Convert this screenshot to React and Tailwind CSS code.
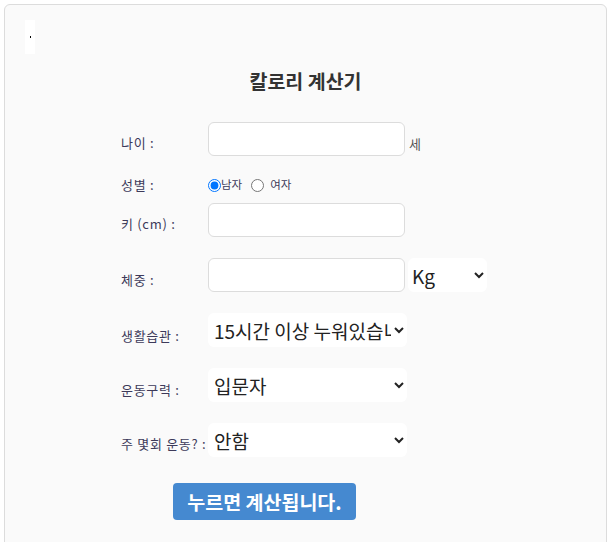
import React, { useState } from 'react';

const font = { fontFamily: '"Noto Sans CJK KR", "Noto Sans", sans-serif' };

function Row({ label, pb = 'pb-1', className = '', children }) {
  return (
    <div className={`flex items-end ${className}`}>
      <label className={`w-[87px] shrink-0 whitespace-nowrap text-[13px] tracking-[0.7px] leading-[18px] text-[#3d3a5a] ${pb}`}>{label}</label>
      {children}
    </div>
  );
}

export default function App() {
  const [gender, setGender] = useState('m');

  return (
    <div className="p-1" style={font}>
      {/* Card */}
      <div className="border border-[#dcdcdc] rounded-md bg-[#fafafa] pt-[15px] pb-10 min-h-[560px]">
        <div className="ml-5 w-[10px] h-[34px] bg-white flex items-center justify-center">
          <span className="block w-px h-[2px] bg-black"></span>
        </div>

        <h1 className="mt-[13px] text-center text-[19.5px] leading-[27px] font-bold text-[#333]">
          칼로리 계산기
        </h1>

        {/* Form */}
        <div className="pl-[116px] flex flex-col">
          <Row label="나이 :" className="mt-[28px]">
            <input className="w-[197px] h-[34px] bg-white border border-[#dcdcdc] rounded-md" />
            <span className="ml-[4px] text-[13px] leading-[18px] pb-[3px] text-[#555]">세</span>
          </Row>

          <Row label="성별 :" pb="pb-0" className="mt-[20px] !items-center">
            <label className="flex items-center text-[11.5px] text-[#3d3a5a]">
              <input
                type="radio"
                name="g"
                checked={gender === 'm'}
                onChange={() => setGender('m')}
                className="w-[13px] h-[13px]"
              />
              남자
            </label>
            <label className="flex items-center text-[11.5px] text-[#3d3a5a] ml-[9px]">
              <input
                type="radio"
                name="g"
                checked={gender === 'f'}
                onChange={() => setGender('f')}
                className="w-[13px] h-[13px] mr-[6px]"
              />
              여자
            </label>
          </Row>

          <Row label="키 (cm) :" className="mt-[9px]">
            <input className="w-[197px] h-[34px] bg-white border border-[#dcdcdc] rounded-md" />
          </Row>

          <Row label="체중 :" pb="pb-[3px]" className="mt-[21px]">
            <input className="w-[197px] h-[34px] bg-white border border-[#dcdcdc] rounded-md" />
            <select className="ml-[3px] w-[79px] h-[34px] bg-white rounded-md text-[19px] text-[#222]">
              <option>Kg</option>
              <option>Lb</option>
            </select>
          </Row>

          <Row label="생활습관 :" pb="pb-[2px]" className="mt-[21px]">
            <select className="w-[199px] h-[34px] bg-white rounded-md text-[19px] text-[#222] pl-[2px]">
              <option>15시간 이상 누워있습니다</option>
              <option>주로 앉아서 생활합니다</option>
              <option>활동적으로 생활합니다</option>
            </select>
          </Row>

          <Row label="운동구력 :" pb="pb-[3px]" className="mt-[21px]">
            <select className="w-[199px] h-[34px] bg-white rounded-md text-[19px] text-[#222] pl-[2px]">
              <option>입문자</option>
              <option>중급자</option>
              <option>상급자</option>
            </select>
          </Row>

          <Row label="주 몇회 운동? :" pb="pb-1" className="mt-[21px]">
            <select className="w-[199px] h-[34px] bg-white rounded-md text-[19px] text-[#222] pl-[2px]">
              <option>안함</option>
              <option>1~2회</option>
              <option>3~4회</option>
              <option>5회 이상</option>
            </select>
          </Row>

          <div className="mt-[26px] ml-[52px]">
            <button className="w-[183px] h-[37px] bg-[#4589d0] rounded-[4px] text-white text-[19.5px] font-bold">
              누르면 계산됩니다.
            </button>
          </div>
        </div>
      </div>
    </div>
  );
}
